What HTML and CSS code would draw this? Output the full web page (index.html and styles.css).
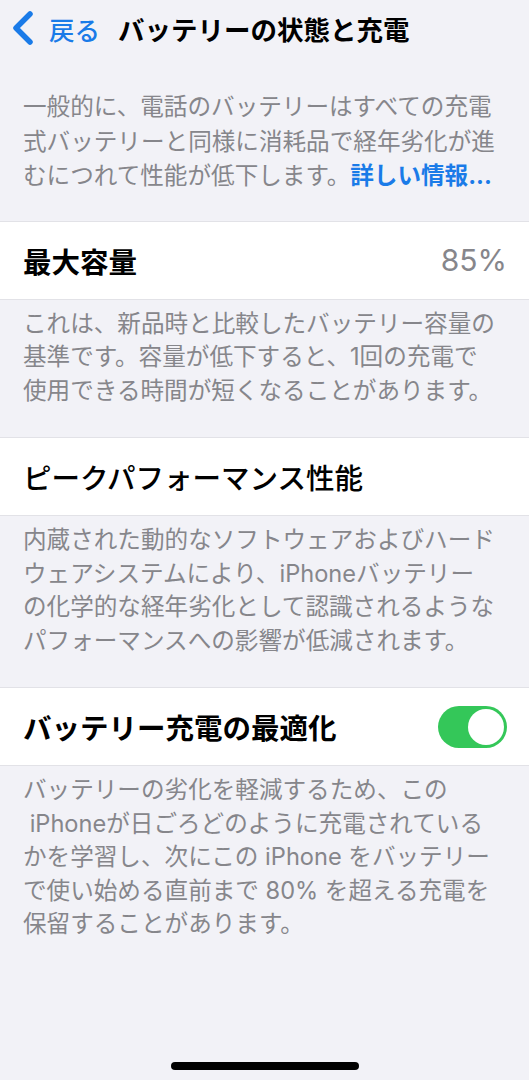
FILE: index.html
```html
<!DOCTYPE html>
<html lang="ja">
<head>
    <meta charset="UTF-8">
    <meta name="viewport" content="width=device-width, initial-scale=1.0">
    <title>バッテリーの状態と充電</title>
    <link rel="stylesheet" href="styles.css">
</head>
<body>
    <div class="screen">
        <div class="nav">
            <a class="back" href="#">
                <svg class="chevron" width="22" height="34" viewBox="0 0 22 34">
                    <polyline points="18,3 4,17 18,31" fill="none" stroke="#1a7be8" stroke-width="5.5" stroke-linecap="round" stroke-linejoin="round"/>
                </svg>
                <span>戻る</span>
            </a>
            <div class="nav-title">バッテリーの状態と充電</div>
        </div>

        <p class="intro">
            一般的に、電話のバッテリーはすべての充電<br>
            式バッテリーと同様に消耗品で経年劣化が進<br>
            むにつれて性能が低下します。<a class="link" href="#">詳しい情報...</a>
        </p>

        <div class="row">
            <span class="row-label bold">最大容量</span>
            <span class="row-value">85%</span>
        </div>
        <p class="note">
            これは、新品時と比較したバッテリー容量の<br>
            基準です。容量が低下すると、1回の充電で<br>
            使用できる時間が短くなることがあります。
        </p>

        <div class="row">
            <span class="row-label">ピークパフォーマンス性能</span>
        </div>
        <p class="note">
            内蔵された動的なソフトウェアおよびハード<br>
            ウェアシステムにより、iPhoneバッテリー<br>
            の化学的な経年劣化として認識されるような<br>
            パフォーマンスへの影響が低減されます。
        </p>

        <div class="row">
            <span class="row-label bold">バッテリー充電の最適化</span>
            <span class="toggle on"><span class="knob"></span></span>
        </div>
        <p class="note">
            バッテリーの劣化を軽減するため、この<br>
            &nbsp;iPhoneが日ごろどのように充電されている<br>
            かを学習し、次にこの iPhone をバッテリー<br>
            で使い始める直前まで 80% を超える充電を<br>
            保留することがあります。
        </p>

        <div class="home-bar"></div>
    </div>
</body>
</html>
```

FILE: styles.css
```css
body {
    margin: 0;
    background-color: #f2f2f7;
    font-family: Inter, "Noto Sans CJK JP", sans-serif;
}

.screen {
    width: 529px;
    height: 1080px;
    display: flex;
    flex-direction: column;
    background-color: #f2f2f7;
}

.nav {
    height: 56px;
    display: flex;
    align-items: center;
    padding-left: 12px;
}

.back {
    display: flex;
    align-items: center;
    gap: 15px;
    color: #1a7be8;
    text-decoration: none;
    font-size: 25.5px;
    font-weight: 500;
}

.nav-title {
    margin-left: 18px;
    font-size: 26.5px;
    font-weight: 700;
    color: #000;
}

.intro {
    margin: 0;
    padding: 34px 23px 27px;
    font-size: 23.6px;
    line-height: 34.5px;
    color: #86868b;
}

.link {
    color: #1a7be8;
    font-weight: 700;
    text-decoration: none;
}

.row {
    height: 77px;
    display: flex;
    align-items: center;
    justify-content: space-between;
    padding: 0 22px 0 23px;
    background-color: #fff;
    border-top: 1px solid #e2e2e7;
    border-bottom: 1px solid #e2e2e7;
}

.row-label {
    font-size: 28.5px;
    font-weight: 500;
    color: #000;
}

.row-label.bold {
    font-weight: 700;
}

.row-value {
    font-size: 30px;
    color: #86868b;
}

.toggle {
    width: 69px;
    height: 42px;
    border-radius: 21px;
    background-color: #e5e5ea;
    display: flex;
    align-items: center;
    padding: 0 3px;
    box-sizing: border-box;
}

.toggle.on {
    background-color: #34c759;
    justify-content: flex-end;
}

.knob {
    width: 36px;
    height: 36px;
    border-radius: 50%;
    background-color: #fff;
}

.note {
    margin: 0;
    padding: 7px 23px 30px;
    font-size: 23.6px;
    line-height: 33.5px;
    color: #86868b;
}

.home-bar {
    width: 188px;
    height: 8px;
    border-radius: 4px;
    background-color: #000;
    margin: auto auto 10px;
}
```
